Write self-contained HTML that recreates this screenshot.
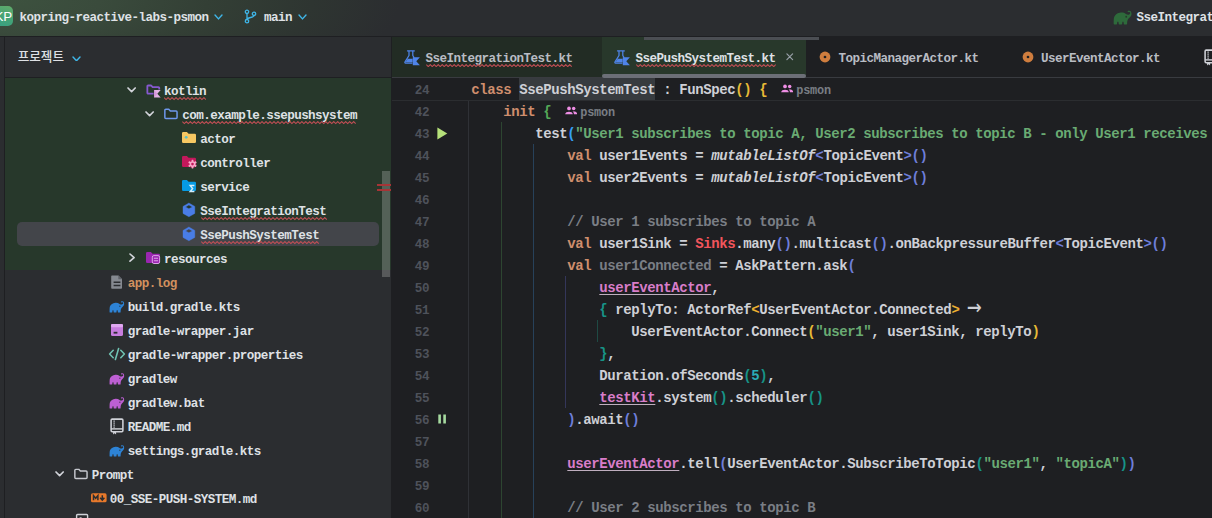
<!DOCTYPE html><html lang="ko"><head><meta charset="utf-8"><title>SsePushSystemTest.kt</title><style>
html,body{margin:0;padding:0}
body{width:1212px;height:518px;overflow:hidden;background:#1e1f22;position:relative;
 font-family:"Liberation Mono","DejaVu Sans Mono",monospace;font-weight:bold;color:#dfe1e5;
 -webkit-font-smoothing:antialiased}
.abs{position:absolute}
#topbar{position:absolute;left:0;top:0;width:1212px;height:36px;background:#2b2d30}
#topglow{position:absolute;left:0;top:0;width:420px;height:36px;background:radial-gradient(ellipse 400px 120px at 0px 0px,#3d523f 0%,#3a4b3c 25%,#333f35 52%,#2e3531 78%,#2b2d30 100%)}
#topline{position:absolute;left:0;top:36px;width:1212px;height:1px;background:#1e1f22}
.ui{font-size:12.6px;letter-spacing:-0.561px;white-space:pre;line-height:24px;height:24px}
#strip{position:absolute;left:0;top:37px;width:4px;height:481px;background:#2b2d30}
#stripb{position:absolute;left:4px;top:37px;width:1px;height:481px;background:#1e1f22}
#panel{position:absolute;left:5px;top:37px;width:386px;height:481px;background:#2b2d30}
#phead{position:absolute;left:5px;top:37px;width:386px;height:40px;background:#2b2d30}
#pheadb{position:absolute;left:5px;top:77px;width:386px;height:1px;background:#1e1f22}
#green{position:absolute;left:5px;top:78px;width:386px;height:192px;background:#27382b}
#sel{position:absolute;left:17px;top:222px;width:362px;height:24px;border-radius:5px;background:#43454a}
#divider{position:absolute;left:391px;top:37px;width:1px;height:481px;background:#1e1f22}
#thumb{position:absolute;left:382px;top:171px;width:8px;height:106px;background:rgba(200,205,200,0.28)}
.redm{position:absolute;left:377px;width:14px;height:1.600px;background:#a63436}
.row{position:absolute;left:0;height:24px}
.row .t{position:absolute;top:1.5px}
.sq{}
#tabs{position:absolute;left:392px;top:37px;width:820px;height:40px;background:#1e1f22}
#tabsb{position:absolute;left:392px;top:77px;width:820px;height:1px;background:#393b40}
#tab1{position:absolute;left:392px;top:37px;width:210px;height:40px;background:#222c24}
#tab2{position:absolute;left:602px;top:37px;width:204px;height:40px;background:#28382b}
#tab2u{position:absolute;left:602px;top:74px;width:204px;height:4px;border-radius:2px;background:#6c6f77}
#tabscroll{position:absolute;left:644px;top:37px;width:175px;height:3px;background:#4b4e53}
#sticky{position:absolute;left:392px;top:78px;width:820px;height:22px;background:#1e1f22}
#stickyb{position:absolute;left:392px;top:100px;width:820px;height:1px;background:#2b2d30}
#hl{position:absolute;left:519px;top:78px;width:136px;height:22px;background:#373b3f}
.cl{position:absolute;left:471.3px;height:22px;line-height:22px;font-size:14.0px;letter-spacing:-0.401px;white-space:pre;color:#ced0d6}
.cl span.t{position:relative;top:0.5px}
.ln{position:absolute;left:392px;width:37.200px;text-align:right;height:22px;line-height:22px;font-size:12.6px;letter-spacing:-0.36px;color:#4e525b}
.guide{position:absolute;width:1px}
.k{color:#cf8e6d} .s{color:#6aab73} .c{color:#7a7e85} .n{color:#2aacb8}
.i{font-style:italic} .p{color:#d97dc9;text-decoration:underline;text-decoration-color:#bfaebf;text-decoration-thickness:1px;text-underline-offset:2px}
.r1{color:#e8ba36} .r2{color:#54a857} .r3{color:#359ff4} .r4{color:#6e7ed9} .r5{color:#179387} .r6{color:#eeb030}
.red{color:#f2555c} .u{color:#7a7e85}
.arr{display:inline-block;width:16px;height:1px;position:relative;letter-spacing:0} .arr span{position:absolute;left:-0.500px;top:-17.700px;line-height:22px;font-family:'DejaVu Sans Mono',monospace;font-weight:normal;font-size:27px;transform:scaleX(0.9);transform-origin:0 50%}
.inl{font-size:11.9px;letter-spacing:-0.24px;color:#797d84}
</style></head><body>
<div id="topbar"></div><div id="topglow"></div><div id="topline"></div>
<div class="abs" style="left:-8px;top:6px;width:21px;height:20px;border-radius:5px;background:linear-gradient(200deg,#62ab69 0%,#45a476 50%,#369f83 100%)"></div>
<div class="abs" style="left:-5.600px;top:5px;height:24px;line-height:24px;font-family:'Liberation Sans',sans-serif;font-weight:normal;font-size:13.4px;color:#fff">KP</div>
<div class="abs ui" style="left:19.5px;top:5.5px">kopring-reactive-labs-psmon</div>
<svg class="abs" style="left:213.7px;top:14.05px" width="9" height="5.9" viewBox="0 0 9 5.9"><path d="M1 1 L4.5 4.9 L8 1" fill="none" stroke="#3fb6e8" stroke-width="1.4" stroke-linecap="round" stroke-linejoin="round"/></svg>
<svg class="abs" style="left:243.7px;top:8.7px" width="13" height="15" viewBox="0 0 13 15"><circle cx="3" cy="2.800" r="1.700" fill="none" stroke="#3fb6e8" stroke-width="1.300"/><circle cx="3" cy="12.200" r="1.700" fill="none" stroke="#3fb6e8" stroke-width="1.300"/><circle cx="10" cy="4.800" r="1.700" fill="none" stroke="#3fb6e8" stroke-width="1.300"/><path d="M3 4.500 V10.500 M10 6.500 c0 2.500 -7 1.500 -7 4" fill="none" stroke="#3fb6e8" stroke-width="1.300"/></svg>
<div class="abs ui" style="left:264px;top:5.5px">main</div>
<svg class="abs" style="left:297.5px;top:14.05px" width="9" height="5.9" viewBox="0 0 9 5.9"><path d="M1 1 L4.5 4.9 L8 1" fill="none" stroke="#3fb6e8" stroke-width="1.4" stroke-linecap="round" stroke-linejoin="round"/></svg>
<svg class="abs" style="left:1112.6px;top:7.7px" width="19" height="19" viewBox="0 0 16.4 14.5"><path d="M15.6 2.3c-.5-.9-1.6-1.2-2.5-.8-.5.2-.6.8-.2 1.1.3.2.6.1.9 0 .4-.2.8 0 1 .3.3.6-.1 1.3-.8 1.700-.9.5-2 .2-2.900-.4C9.900 3.300 8.400 2.900 6.900 3 3.900 3.200 1 5.200.7 8.400c-.1 1.200-.1 3.300-.1 4.300 0 .3.300.6.600.6h1.700c.3 0 .6-.2.600-.6l.2-1.500c.1-.5.900-.5 1 0l.2 1.500c0 .3.300.6.600.6h1.800c.3 0 .6-.2.600-.6l.2-1.500c.1-.5.900-.5 1 0l.2 1.500c0 .3.300.6.600.6h1.700c.3 0 .6-.3.600-.6 0-1.600.1-3.100 1.200-4.500 1.300-1.600 2.900-2.200 2.500-4.700-.1-.4-.2-.8-.4-1.200z" fill="#2e6a3b"/><circle cx="11.4" cy="6.6" r="0.8" fill="#1e1f22" opacity="0.6"/></svg>
<div class="abs ui" style="left:1136.5px;top:5.5px">SseIntegrationTest</div>
<div id="strip"></div><div id="stripb"></div><div id="panel"></div><div id="phead"></div><div id="pheadb"></div><div id="green"></div><div id="sel"></div>
<div class="abs" style="left:17.700px;top:45.3px;height:24px;line-height:24px;font-family:'Liberation Sans','Noto Sans CJK KR',sans-serif;font-weight:500;font-size:12.6px;letter-spacing:0px;color:#dfe1e5">프로젝트</div>
<svg class="abs" style="left:71.7px;top:55.5px" width="9" height="5.8" viewBox="0 0 9 5.8"><path d="M1 1 L4.5 4.8 L8 1" fill="none" stroke="#3fb6e8" stroke-width="1.4" stroke-linecap="round" stroke-linejoin="round"/></svg>
<svg class="abs" style="left:127.4px;top:87.45px" width="9.2" height="5.7" viewBox="0 0 9.2 5.7"><path d="M1 1 L4.6 4.7 L8.2 1" fill="none" stroke="#d2d4da" stroke-width="1.65" stroke-linecap="round" stroke-linejoin="round"/></svg>
<svg class="abs" style="left:145.5px;top:82.3px" width="16" height="16" viewBox="0 0 16 16"><path d="M7.600 11.550 H2.150 a0.800 0.800 0 0 1 -0.800 -0.800 V4.300 a0.800 0.800 0 0 1 0.800 -0.800 h3 l1.500 1.700 h5.800 a0.800 0.800 0 0 1 0.800 0.800 V7.600" fill="none" stroke="#8659cf" stroke-width="1.800" stroke-linejoin="round"/><path d="M8.100 8 H14.700 L11.300 11.700 L14.700 15.400 H8.100 Z" fill="#e4b2e6"/><path d="M8.100 8 L11.300 11.700 L8.100 15.400 Z" fill="#d595da"/></svg>
<div class="abs ui" style="left:164.0px;top:79.5px">kotlin</div>
<svg class="abs" style="left:164.2px;top:97.4px" width="42.0" height="3.2" viewBox="0 0 42.0 3.2"><polyline points="0,0.6 2,2.6 4,0.6 6,2.6 8,0.6 10,2.6 12,0.6 14,2.6 16,0.6 18,2.6 20,0.6 22,2.6 24,0.6 26,2.6 28,0.6 30,2.6 32,0.6 34,2.6 36,0.6 38,2.6 40,0.6 42,2.6" fill="none" stroke="#c54f56" stroke-width="1.050"/></svg>
<svg class="abs" style="left:145.4px;top:111.45px" width="9.2" height="5.7" viewBox="0 0 9.2 5.7"><path d="M1 1 L4.6 4.7 L8.2 1" fill="none" stroke="#d2d4da" stroke-width="1.65" stroke-linecap="round" stroke-linejoin="round"/></svg>
<svg class="abs" style="left:163px;top:106.3px" width="16" height="16" viewBox="0 0 16 16"><path d="M1.850 4.350 a1 1 0 0 1 1 -1 h2.900 l1.600 1.700 h5.700 a1 1 0 0 1 1 1 v5.400 a1 1 0 0 1 -1 1 h-10.200 a1 1 0 0 1 -1 -1 z" fill="#243327" stroke="#6f98ec" stroke-width="1.500" stroke-linejoin="round"/></svg>
<div class="abs ui" style="left:182.20000000000002px;top:103.5px">com.example.ssepushsystem</div>
<svg class="abs" style="left:182.4px;top:121.4px" width="175.0" height="3.2" viewBox="0 0 175.0 3.2"><polyline points="0,0.6 2,2.6 4,0.6 6,2.6 8,0.6 10,2.6 12,0.6 14,2.6 16,0.6 18,2.6 20,0.6 22,2.6 24,0.6 26,2.6 28,0.6 30,2.6 32,0.6 34,2.6 36,0.6 38,2.6 40,0.6 42,2.6 44,0.6 46,2.6 48,0.6 50,2.6 52,0.6 54,2.6 56,0.6 58,2.6 60,0.6 62,2.6 64,0.6 66,2.6 68,0.6 70,2.6 72,0.6 74,2.6 76,0.6 78,2.6 80,0.6 82,2.6 84,0.6 86,2.6 88,0.6 90,2.6 92,0.6 94,2.6 96,0.6 98,2.6 100,0.6 102,2.6 104,0.6 106,2.6 108,0.6 110,2.6 112,0.6 114,2.6 116,0.6 118,2.6 120,0.6 122,2.6 124,0.6 126,2.6 128,0.6 130,2.6 132,0.6 134,2.6 136,0.6 138,2.6 140,0.6 142,2.6 144,0.6 146,2.6 148,0.6 150,2.6 152,0.6 154,2.6 156,0.6 158,2.6 160,0.6 162,2.6 164,0.6 166,2.6 168,0.6 170,2.6 172,0.6 174,2.6" fill="none" stroke="#c54f56" stroke-width="1.050"/></svg>
<svg class="abs" style="left:181px;top:130.3px" width="16" height="16" viewBox="0 0 16 16"><path d="M1 3.3 a1.3 1.3 0 0 1 1.3 -1.3 h3.6 l1.7 1.8 h6.1 a1.3 1.3 0 0 1 1.3 1.3 v6.6 a1.3 1.3 0 0 1 -1.3 1.3 h-11.4 a1.3 1.3 0 0 1 -1.3 -1.3 z" fill="#f7c862"/><circle cx="5.200" cy="7.300" r="1.400" fill="#5bc0c8"/></svg>
<div class="abs ui" style="left:200.3px;top:127.5px">actor</div>
<svg class="abs" style="left:181px;top:154.3px" width="16" height="16" viewBox="0 0 16 16"><path d="M1 3.3 a1.3 1.3 0 0 1 1.3 -1.3 h3.6 l1.7 1.8 h6.1 a1.3 1.3 0 0 1 1.3 1.3 v6.6 a1.3 1.3 0 0 1 -1.3 1.3 h-11.4 a1.3 1.3 0 0 1 -1.3 -1.3 z" fill="#c2185b"/><g transform="translate(11.500,10.100)"><circle r="3.800" fill="#c2185b"/><rect x="-0.9" y="-4.4" width="1.8" height="2.4" rx="0.4" fill="#f8a8c8" transform="rotate(0)"/><rect x="-0.9" y="-4.4" width="1.8" height="2.4" rx="0.4" fill="#f8a8c8" transform="rotate(60)"/><rect x="-0.9" y="-4.4" width="1.8" height="2.4" rx="0.4" fill="#f8a8c8" transform="rotate(120)"/><rect x="-0.9" y="-4.4" width="1.8" height="2.4" rx="0.4" fill="#f8a8c8" transform="rotate(180)"/><rect x="-0.9" y="-4.4" width="1.8" height="2.4" rx="0.4" fill="#f8a8c8" transform="rotate(240)"/><rect x="-0.9" y="-4.4" width="1.8" height="2.4" rx="0.4" fill="#f8a8c8" transform="rotate(300)"/><circle r="2.800" fill="#f8a8c8"/><circle r="1.300" fill="#c2185b"/></g></svg>
<div class="abs ui" style="left:200.3px;top:151.5px">controller</div>
<svg class="abs" style="left:181px;top:178.3px" width="16" height="16" viewBox="0 0 16 16"><path d="M1 3.3 a1.3 1.3 0 0 1 1.3 -1.3 h3.6 l1.7 1.8 h6.1 a1.3 1.3 0 0 1 1.3 1.3 v6.6 a1.3 1.3 0 0 1 -1.3 1.3 h-11.4 a1.3 1.3 0 0 1 -1.3 -1.3 z" fill="#069be4"/><path d="M13.400 7.600 h-4.200 l2.400 3 l-2.400 3 h4.200" fill="none" stroke="#d4eefc" stroke-width="1.500" stroke-linejoin="miter"/></svg>
<div class="abs ui" style="left:200.3px;top:175.5px">service</div>
<svg class="abs" style="left:181px;top:202.3px" width="16" height="16" viewBox="0 0 16 16"><path fill-rule="evenodd" d="M7.900 1 L13.800 4.400 V11.400 L7.900 14.800 L2 11.400 V4.400 Z M7.900 3 L11.300 4.900 L7.900 6.800 L4.500 4.900 Z" fill="#497de6" stroke="#497de6" stroke-width="0.400" stroke-linejoin="round"/></svg>
<div class="abs ui" style="left:200.3px;top:199.5px">SseIntegrationTest</div>
<svg class="abs" style="left:200.5px;top:217.4px" width="126.0" height="3.2" viewBox="0 0 126.0 3.2"><polyline points="0,0.6 2,2.6 4,0.6 6,2.6 8,0.6 10,2.6 12,0.6 14,2.6 16,0.6 18,2.6 20,0.6 22,2.6 24,0.6 26,2.6 28,0.6 30,2.6 32,0.6 34,2.6 36,0.6 38,2.6 40,0.6 42,2.6 44,0.6 46,2.6 48,0.6 50,2.6 52,0.6 54,2.6 56,0.6 58,2.6 60,0.6 62,2.6 64,0.6 66,2.6 68,0.6 70,2.6 72,0.6 74,2.6 76,0.6 78,2.6 80,0.6 82,2.6 84,0.6 86,2.6 88,0.6 90,2.6 92,0.6 94,2.6 96,0.6 98,2.6 100,0.6 102,2.6 104,0.6 106,2.6 108,0.6 110,2.6 112,0.6 114,2.6 116,0.6 118,2.6 120,0.6 122,2.6 124,0.6 126,2.6" fill="none" stroke="#c54f56" stroke-width="1.050"/></svg>
<svg class="abs" style="left:181px;top:226.3px" width="16" height="16" viewBox="0 0 16 16"><path fill-rule="evenodd" d="M7.900 1 L13.800 4.400 V11.400 L7.900 14.800 L2 11.400 V4.400 Z M7.900 3 L11.300 4.900 L7.900 6.800 L4.500 4.900 Z" fill="#497de6" stroke="#497de6" stroke-width="0.400" stroke-linejoin="round"/></svg>
<div class="abs ui" style="left:200.3px;top:223.5px">SsePushSystemTest</div>
<svg class="abs" style="left:200.5px;top:241.4px" width="119.0" height="3.2" viewBox="0 0 119.0 3.2"><polyline points="0,0.6 2,2.6 4,0.6 6,2.6 8,0.6 10,2.6 12,0.6 14,2.6 16,0.6 18,2.6 20,0.6 22,2.6 24,0.6 26,2.6 28,0.6 30,2.6 32,0.6 34,2.6 36,0.6 38,2.6 40,0.6 42,2.6 44,0.6 46,2.6 48,0.6 50,2.6 52,0.6 54,2.6 56,0.6 58,2.6 60,0.6 62,2.6 64,0.6 66,2.6 68,0.6 70,2.6 72,0.6 74,2.6 76,0.6 78,2.6 80,0.6 82,2.6 84,0.6 86,2.6 88,0.6 90,2.6 92,0.6 94,2.6 96,0.6 98,2.6 100,0.6 102,2.6 104,0.6 106,2.6 108,0.6 110,2.6 112,0.6 114,2.6 116,0.6 118,2.6" fill="none" stroke="#c54f56" stroke-width="1.050"/></svg>
<svg class="abs" style="left:129.25px;top:253.29999999999998px" width="6.1" height="9.2" viewBox="0 0 6.1 9.2"><path d="M1 1 L5.1 4.6 L1 8.2" fill="none" stroke="#d2d4da" stroke-width="1.65" stroke-linecap="round" stroke-linejoin="round"/></svg>
<svg class="abs" style="left:145.2px;top:250.3px" width="16" height="16" viewBox="0 0 16 16"><path d="M1 3.3 a1.3 1.3 0 0 1 1.3 -1.3 h3.6 l1.7 1.8 h6.1 a1.3 1.3 0 0 1 1.3 1.3 v6.6 a1.3 1.3 0 0 1 -1.3 1.3 h-11.4 a1.3 1.3 0 0 1 -1.3 -1.3 z" fill="#9a27b0"/><rect x="7.300" y="5.600" width="7.300" height="7.900" rx="1.600" fill="#9a27b0" stroke="#dba4e6" stroke-width="1"/><path d="M8.900 8.300 h4.100 M8.900 10.800 h4.100" stroke="#dba4e6" stroke-width="1.100"/></svg>
<div class="abs ui" style="left:164.0px;top:247.5px">resources</div>
<svg class="abs" style="left:108.5px;top:274.3px" width="16" height="16" viewBox="0 0 16 16"><path d="M3 1.5 h6.5 l3.5 3.5 v9 a0.8 0.8 0 0 1 -0.8 0.8 h-9.2 a0.8 0.8 0 0 1 -0.8 -0.8 v-11.7 a0.8 0.8 0 0 1 0.8 -0.8 z" fill="#858990"/><path d="M9.3 1.5 v3.7 h3.700" fill="#5e6167"/><path d="M4.600 8.300 h6.800 M4.600 11.400 h6.800" stroke="#2b2d30" stroke-width="1.500"/></svg>
<div class="abs ui" style="left:127.8px;top:271.5px;color:#d2915f">app.log</div>
<svg class="abs" style="left:109px;top:298.90000000000003px" width="15.6" height="15.6" viewBox="0 0 16.4 14.5"><path d="M15.6 2.3c-.5-.9-1.6-1.2-2.5-.8-.5.2-.6.8-.2 1.1.3.2.6.1.9 0 .4-.2.8 0 1 .3.3.6-.1 1.3-.8 1.700-.9.5-2 .2-2.900-.4C9.900 3.300 8.400 2.900 6.900 3 3.900 3.200 1 5.200.7 8.400c-.1 1.200-.1 3.300-.1 4.300 0 .3.300.6.600.6h1.700c.3 0 .6-.2.600-.6l.2-1.500c.1-.5.900-.5 1 0l.2 1.500c0 .3.300.6.600.6h1.800c.3 0 .6-.2.600-.6l.2-1.500c.1-.5.900-.5 1 0l.2 1.500c0 .3.300.6.600.6h1.700c.3 0 .6-.3.600-.6 0-1.600.1-3.100 1.200-4.500 1.300-1.600 2.900-2.200 2.500-4.700-.1-.4-.2-.8-.4-1.200z" fill="#2d83d6"/><circle cx="11.4" cy="6.6" r="0.8" fill="#1e1f22" opacity="0.6"/></svg>
<div class="abs ui" style="left:127.8px;top:295.5px">build.gradle.kts</div>
<svg class="abs" style="left:108.5px;top:322.3px" width="16" height="16" viewBox="0 0 16 16"><rect x="2" y="2" width="12" height="12" rx="1.6" fill="#c77dde"/><rect x="2" y="2" width="12" height="3.2" rx="1.2" fill="#e0a8f0"/><rect x="4.600" y="9.8" width="3.8" height="1.8" fill="#2b2d30"/></svg>
<div class="abs ui" style="left:127.8px;top:319.5px">gradle-wrapper.jar</div>
<svg class="abs" style="left:107.5px;top:346.3px" width="18" height="16" viewBox="0 0 18 16"><path d="M5.2 4.3 L1.6 8 L5.2 11.700 M12.8 4.3 L16.400 8 L12.8 11.700 M10.600 2.600 L7.400 13.400" fill="none" stroke="#6fc2b2" stroke-width="1.600" stroke-linecap="round" stroke-linejoin="round"/></svg>
<div class="abs ui" style="left:127.8px;top:343.5px">gradle-wrapper.properties</div>
<svg class="abs" style="left:109px;top:370.90000000000003px" width="15.6" height="15.6" viewBox="0 0 16.4 14.5"><path d="M15.6 2.3c-.5-.9-1.6-1.2-2.5-.8-.5.2-.6.8-.2 1.1.3.2.6.1.9 0 .4-.2.8 0 1 .3.3.6-.1 1.3-.8 1.700-.9.5-2 .2-2.900-.4C9.900 3.300 8.400 2.900 6.900 3 3.900 3.200 1 5.200.7 8.400c-.1 1.200-.1 3.300-.1 4.300 0 .3.300.6.600.6h1.700c.3 0 .6-.2.600-.6l.2-1.500c.1-.5.900-.5 1 0l.2 1.500c0 .3.300.6.600.6h1.800c.3 0 .6-.2.600-.6l.2-1.500c.1-.5.900-.5 1 0l.2 1.500c0 .3.300.6.600.6h1.700c.3 0 .6-.3.600-.6 0-1.600.1-3.100 1.200-4.500 1.300-1.600 2.900-2.200 2.500-4.700-.1-.4-.2-.8-.4-1.200z" fill="#bd5fd3"/><circle cx="11.4" cy="6.6" r="0.8" fill="#1e1f22" opacity="0.6"/></svg>
<div class="abs ui" style="left:127.8px;top:367.5px">gradlew</div>
<svg class="abs" style="left:109px;top:394.90000000000003px" width="15.6" height="15.6" viewBox="0 0 16.4 14.5"><path d="M15.6 2.3c-.5-.9-1.6-1.2-2.5-.8-.5.2-.6.8-.2 1.1.3.2.6.1.9 0 .4-.2.8 0 1 .3.3.6-.1 1.3-.8 1.700-.9.5-2 .2-2.900-.4C9.900 3.300 8.400 2.900 6.900 3 3.900 3.200 1 5.200.7 8.400c-.1 1.200-.1 3.300-.1 4.300 0 .3.300.6.600.6h1.700c.3 0 .6-.2.600-.6l.2-1.500c.1-.5.900-.5 1 0l.2 1.500c0 .3.300.6.600.6h1.800c.3 0 .6-.2.600-.6l.2-1.500c.1-.5.900-.5 1 0l.2 1.500c0 .3.300.6.600.6h1.700c.3 0 .6-.3.600-.6 0-1.600.1-3.100 1.200-4.500 1.300-1.600 2.900-2.200 2.500-4.700-.1-.4-.2-.8-.4-1.200z" fill="#bd5fd3"/><circle cx="11.4" cy="6.6" r="0.8" fill="#1e1f22" opacity="0.6"/></svg>
<div class="abs ui" style="left:127.8px;top:391.5px">gradlew.bat</div>
<svg class="abs" style="left:110.4px;top:417.6px" width="14" height="17" viewBox="0 0 14 17"><rect x="1.100" y="1.100" width="11.800" height="12.600" rx="1.100" fill="none" stroke="#d0d2d8" stroke-width="1.550"/><path d="M1.100 10.900 H12.900" stroke="#d0d2d8" stroke-width="1.400"/><path d="M4.100 2.600 V9.800" stroke="#d0d2d8" stroke-width="1.300" stroke-dasharray="1.100 0.900"/><path d="M3.100 13.700 H6.100 V16.400 L4.600 15.300 L3.100 16.400 Z" fill="#d0d2d8"/></svg>
<div class="abs ui" style="left:127.8px;top:415.5px">README.md</div>
<svg class="abs" style="left:109px;top:442.90000000000003px" width="15.6" height="15.6" viewBox="0 0 16.4 14.5"><path d="M15.6 2.3c-.5-.9-1.6-1.2-2.5-.8-.5.2-.6.8-.2 1.1.3.2.6.1.9 0 .4-.2.8 0 1 .3.3.6-.1 1.3-.8 1.700-.9.5-2 .2-2.900-.4C9.900 3.300 8.400 2.900 6.900 3 3.900 3.200 1 5.200.7 8.400c-.1 1.200-.1 3.300-.1 4.300 0 .3.300.6.600.6h1.700c.3 0 .6-.2.600-.6l.2-1.500c.1-.5.900-.5 1 0l.2 1.500c0 .3.300.6.600.6h1.800c.3 0 .6-.2.600-.6l.2-1.500c.1-.5.900-.5 1 0l.2 1.500c0 .3.300.6.600.6h1.700c.3 0 .6-.3.600-.6 0-1.600.1-3.100 1.200-4.500 1.300-1.600 2.900-2.200 2.500-4.700-.1-.4-.2-.8-.4-1.200z" fill="#2d83d6"/><circle cx="11.4" cy="6.6" r="0.8" fill="#1e1f22" opacity="0.6"/></svg>
<div class="abs ui" style="left:127.8px;top:439.5px">settings.gradle.kts</div>
<svg class="abs" style="left:55.4px;top:471.45px" width="9.2" height="5.7" viewBox="0 0 9.2 5.7"><path d="M1 1 L4.6 4.7 L8.2 1" fill="none" stroke="#d2d4da" stroke-width="1.65" stroke-linecap="round" stroke-linejoin="round"/></svg>
<svg class="abs" style="left:73px;top:466.3px" width="16" height="16" viewBox="0 0 16 16"><path d="M1.850 4.350 a1 1 0 0 1 1 -1 h2.900 l1.600 1.700 h5.700 a1 1 0 0 1 1 1 v5.400 a1 1 0 0 1 -1 1 h-10.200 a1 1 0 0 1 -1 -1 z" fill="none" stroke="#c6c8ce" stroke-width="1.450" stroke-linejoin="round"/></svg>
<div class="abs ui" style="left:91.8px;top:463.5px">Prompt</div>
<svg class="abs" style="left:91.2px;top:493.3px" width="16" height="10" viewBox="0 0 16 10"><rect x="0" y="0.300" width="15.600" height="9" rx="1.600" fill="#e8792b"/><path d="M2.500 7.300 V2.600 L4.700 5.300 L6.900 2.600 V7.300" fill="none" stroke="#2b2d30" stroke-width="1.500" stroke-linejoin="miter"/><path d="M11.300 2.200 V6.600 M9.200 4.700 L11.300 7.100 L13.400 4.700" fill="none" stroke="#2b2d30" stroke-width="1.500"/></svg>
<div class="abs ui" style="left:109.8px;top:487.5px">00_SSE-PUSH-SYSTEM.md</div>
<svg class="abs" style="left:74.5px;top:512.5px" width="14" height="6" viewBox="0 0 14 6"><path d="M1.600 6 V2.500 a1 1 0 0 1 1 -1 h9 a1 1 0 0 1 1 1 V6" fill="none" stroke="#d0d2d8" stroke-width="1.400"/><rect x="4.600" y="4.300" width="2" height="1.700" fill="#d0d2d8"/></svg>
<div id="thumb"></div><div class="redm" style="top:184px"></div><div class="redm" style="top:189px"></div>
<div id="divider"></div>
<div id="tabs"></div><div id="tab1"></div><div id="tab2"></div><div id="tabsb"></div><div id="tab2u"></div><div id="tabscroll"></div>
<svg class="abs" style="left:404px;top:49.5px" width="16" height="16" viewBox="0 0 16 16"><path d="M3.5 0.9 H10.300 M5 0.9 V5.500 L0.900 12.200 a0.600 0.600 0 0 0 0.500 0.900 H8 M8.800 0.900 V5.500 L9.900 7.300" fill="none" stroke="#4f84e8" stroke-width="1.250" stroke-linecap="round" stroke-linejoin="round"/><path d="M3.700 8.800 H8.600 V12.300 H1.600 Z" fill="#4f84e8"/><path d="M8.800 7.200 H15.900 L12.300 11.200 L15.900 15.200 H8.800 Z" fill="#4f84e8"/></svg>
<div class="abs ui" style="left:425.5px;top:47px;color:#b9bcc3">SseIntegrationTest.kt</div>
<svg class="abs" style="left:425.5px;top:63.9px" width="147.0" height="3.2" viewBox="0 0 147.0 3.2"><polyline points="0,0.6 2,2.6 4,0.6 6,2.6 8,0.6 10,2.6 12,0.6 14,2.6 16,0.6 18,2.6 20,0.6 22,2.6 24,0.6 26,2.6 28,0.6 30,2.6 32,0.6 34,2.6 36,0.6 38,2.6 40,0.6 42,2.6 44,0.6 46,2.6 48,0.6 50,2.6 52,0.6 54,2.6 56,0.6 58,2.6 60,0.6 62,2.6 64,0.6 66,2.6 68,0.6 70,2.6 72,0.6 74,2.6 76,0.6 78,2.6 80,0.6 82,2.6 84,0.6 86,2.6 88,0.6 90,2.6 92,0.6 94,2.6 96,0.6 98,2.6 100,0.6 102,2.6 104,0.6 106,2.6 108,0.6 110,2.6 112,0.6 114,2.6 116,0.6 118,2.6 120,0.6 122,2.6 124,0.6 126,2.6 128,0.6 130,2.6 132,0.6 134,2.6 136,0.6 138,2.6 140,0.6 142,2.6 144,0.6 146,2.6" fill="none" stroke="#c54f56" stroke-width="1.050"/></svg>
<svg class="abs" style="left:613.5px;top:49.5px" width="16" height="16" viewBox="0 0 16 16"><path d="M3.5 0.9 H10.300 M5 0.9 V5.500 L0.900 12.200 a0.600 0.600 0 0 0 0.500 0.900 H8 M8.800 0.900 V5.500 L9.900 7.300" fill="none" stroke="#4f84e8" stroke-width="1.250" stroke-linecap="round" stroke-linejoin="round"/><path d="M3.700 8.800 H8.600 V12.300 H1.600 Z" fill="#4f84e8"/><path d="M8.800 7.200 H15.900 L12.300 11.200 L15.900 15.200 H8.800 Z" fill="#4f84e8"/></svg>
<div class="abs ui" style="left:635.5px;top:47px">SsePushSystemTest.kt</div>
<svg class="abs" style="left:635.5px;top:63.9px" width="140.0" height="3.2" viewBox="0 0 140.0 3.2"><polyline points="0,0.6 2,2.6 4,0.6 6,2.6 8,0.6 10,2.6 12,0.6 14,2.6 16,0.6 18,2.6 20,0.6 22,2.6 24,0.6 26,2.6 28,0.6 30,2.6 32,0.6 34,2.6 36,0.6 38,2.6 40,0.6 42,2.6 44,0.6 46,2.6 48,0.6 50,2.6 52,0.6 54,2.6 56,0.6 58,2.6 60,0.6 62,2.6 64,0.6 66,2.6 68,0.6 70,2.6 72,0.6 74,2.6 76,0.6 78,2.6 80,0.6 82,2.6 84,0.6 86,2.6 88,0.6 90,2.6 92,0.6 94,2.6 96,0.6 98,2.6 100,0.6 102,2.6 104,0.6 106,2.6 108,0.6 110,2.6 112,0.6 114,2.6 116,0.6 118,2.6 120,0.6 122,2.6 124,0.6 126,2.6 128,0.6 130,2.6 132,0.6 134,2.6 136,0.6 138,2.6 140,0.6" fill="none" stroke="#c54f56" stroke-width="1.050"/></svg>
<svg class="abs" style="left:786.25px;top:53.2px" width="7.5" height="7.5" viewBox="0 0 7.5 7.5"><path d="M0.900 0.900 L6.600 6.600 M6.600 0.900 L0.900 6.600" stroke="#98a0a8" stroke-width="1.200" stroke-linecap="round"/></svg>
<svg class="abs" style="left:819px;top:51.3px" width="12" height="12" viewBox="0 0 12 12"><circle cx="6" cy="6" r="5.400" fill="#cf7d3e"/><circle cx="6" cy="6" r="1.350" fill="#1e1f22"/></svg>
<div class="abs ui" style="left:838.5px;top:47px;color:#b9bcc3">TopicManagerActor.kt</div>
<svg class="abs" style="left:1021.5px;top:51.3px" width="12" height="12" viewBox="0 0 12 12"><circle cx="6" cy="6" r="5.400" fill="#cf7d3e"/><circle cx="6" cy="6" r="1.350" fill="#1e1f22"/></svg>
<div class="abs ui" style="left:1041px;top:47px;color:#b9bcc3">UserEventActor.kt</div>
<svg class="abs" style="left:1203.5px;top:48.5px" width="14" height="17" viewBox="0 0 14 17"><rect x="1.100" y="1.100" width="11.800" height="12.600" rx="1.100" fill="none" stroke="#d0d2d8" stroke-width="1.550"/><path d="M1.100 10.900 H12.900" stroke="#d0d2d8" stroke-width="1.400"/><path d="M4.100 2.600 V9.800" stroke="#d0d2d8" stroke-width="1.300" stroke-dasharray="1.100 0.900"/><path d="M3.100 13.700 H6.100 V16.400 L4.600 15.300 L3.100 16.400 Z" fill="#d0d2d8"/></svg>
<div id="sticky"></div><div id="hl"></div><div id="stickyb"></div>
<div class="guide" style="left:468px;top:101px;height:417px;background:#2f3136"></div>
<div class="guide" style="left:501px;top:122px;height:396px;background:#2d4531"></div>
<div class="guide" style="left:533px;top:144px;height:374px;background:#27415a"></div>
<div class="guide" style="left:565px;top:276px;height:132px;background:#34365a"></div>
<div class="guide" style="left:597px;top:320px;height:22px;background:#1f4a44"></div>
<div class="ln" style="top:80px">24</div>
<div class="cl" style="top:79px"><span class="k">class</span> SsePushSystemTest : FunSpec<span class="r1">()</span> <span class="r1">{</span></div>
<svg class="abs" style="left:780.8px;top:84.4px" width="12.5" height="10" viewBox="0 0 12.5 10"><circle cx="4" cy="2.400" r="1.850" fill="#ee8ee4"/><path d="M0.200 8.300 c0 -3.300 7.600 -3.300 7.600 0 z" fill="#ee8ee4"/><circle cx="8.700" cy="2.400" r="1.750" fill="#ee8ee4"/><path d="M8.900 5.400 c2.500 0 3.400 1.300 3.400 2.900 h-3.400 c0 -1.200 -0.500 -2.200 -1.300 -2.700z" fill="#ee8ee4"/></svg>
<div class="abs inl" style="left:796.3px;top:80px;height:22px;line-height:22px">psmon</div>
<div class="ln" style="top:102px">42</div>
<div class="cl" style="top:101px">    <span class="k">init</span> <span class="r2">{</span></div>
<svg class="abs" style="left:564.8px;top:106.4px" width="12.5" height="10" viewBox="0 0 12.5 10"><circle cx="4" cy="2.400" r="1.850" fill="#ee8ee4"/><path d="M0.200 8.300 c0 -3.300 7.600 -3.300 7.600 0 z" fill="#ee8ee4"/><circle cx="8.700" cy="2.400" r="1.750" fill="#ee8ee4"/><path d="M8.900 5.400 c2.500 0 3.400 1.300 3.400 2.900 h-3.400 c0 -1.200 -0.500 -2.200 -1.300 -2.700z" fill="#ee8ee4"/></svg>
<div class="abs inl" style="left:580.3px;top:102px;height:22px;line-height:22px">psmon</div>
<div class="ln" style="top:124px">43</div>
<div class="cl" style="top:123px">        test<span class="r3">(</span><span class="s">"User1 subscribes to topic A, User2 subscribes to topic B - only User1 receives </span></div>
<div class="ln" style="top:146px">44</div>
<div class="cl" style="top:145px">            <span class="k">val</span> user1Events = <span class="i">mutableListOf</span><span class="r4">&lt;</span>TopicEvent<span class="r4">&gt;()</span></div>
<div class="ln" style="top:168px">45</div>
<div class="cl" style="top:167px">            <span class="k">val</span> user2Events = <span class="i">mutableListOf</span><span class="r4">&lt;</span>TopicEvent<span class="r4">&gt;()</span></div>
<div class="ln" style="top:190px">46</div>
<div class="ln" style="top:212px">47</div>
<div class="cl" style="top:211px">            <span class="c">// User 1 subscribes to topic A</span></div>
<div class="ln" style="top:234px">48</div>
<div class="cl" style="top:233px">            <span class="k">val</span> user1Sink = <span class="red">Sinks</span>.many<span class="r4">()</span>.multicast<span class="r4">()</span>.onBackpressureBuffer<span class="r4">&lt;</span>TopicEvent<span class="r4">&gt;()</span></div>
<div class="ln" style="top:256px">49</div>
<div class="cl" style="top:255px">            <span class="k">val</span> <span class="u">user1Connected</span> = AskPattern.ask<span class="r4">(</span></div>
<div class="ln" style="top:278px">50</div>
<div class="cl" style="top:277px">                <span class="p">userEventActor</span>,</div>
<div class="ln" style="top:300px">51</div>
<div class="cl" style="top:299px">                <span class="r5">{</span> replyTo: ActorRef<span class="r6">&lt;</span>UserEventActor.Connected<span class="r6">&gt;</span> <span class="arr"><span>→</span></span></div>
<div class="ln" style="top:322px">52</div>
<div class="cl" style="top:321px">                    UserEventActor.Connect<span class="r1">(</span><span class="s">"user1"</span>, user1Sink, replyTo<span class="r1">)</span></div>
<div class="ln" style="top:344px">53</div>
<div class="cl" style="top:343px">                <span class="r5">}</span>,</div>
<div class="ln" style="top:366px">54</div>
<div class="cl" style="top:365px">                Duration.ofSeconds<span class="r5">(</span><span class="n">5</span><span class="r5">)</span>,</div>
<div class="ln" style="top:388px">55</div>
<div class="cl" style="top:387px">                <span class="p">testKit</span>.system<span class="r5">()</span>.scheduler<span class="r5">()</span></div>
<div class="ln" style="top:410px">56</div>
<div class="cl" style="top:409px">            <span class="r4">)</span>.await<span class="r4">()</span></div>
<div class="ln" style="top:432px">57</div>
<div class="ln" style="top:454px">58</div>
<div class="cl" style="top:453px">            <span class="p">userEventActor</span>.tell<span class="r4">(</span>UserEventActor.SubscribeToTopic<span class="r5">(</span><span class="s">"user1"</span>, <span class="s">"topicA"</span><span class="r5">)</span><span class="r4">)</span></div>
<div class="ln" style="top:476px">59</div>
<div class="ln" style="top:498px">60</div>
<div class="cl" style="top:497px">            <span class="c">// User 2 subscribes to topic B</span></div>
<svg class="abs" style="left:437px;top:126.5px" width="11" height="13" viewBox="0 0 11 13"><path d="M0.400 0.500 L10.300 6.500 L0.400 12.500 Z" fill="#b5e07a"/></svg>
<svg class="abs" style="left:438px;top:414px" width="9" height="10" viewBox="0 0 9 10"><rect x="0.300" y="0.500" width="2.600" height="9" fill="#a6dba0"/><rect x="5.300" y="0.500" width="2.600" height="9" fill="#a6dba0"/></svg>
</body></html>
